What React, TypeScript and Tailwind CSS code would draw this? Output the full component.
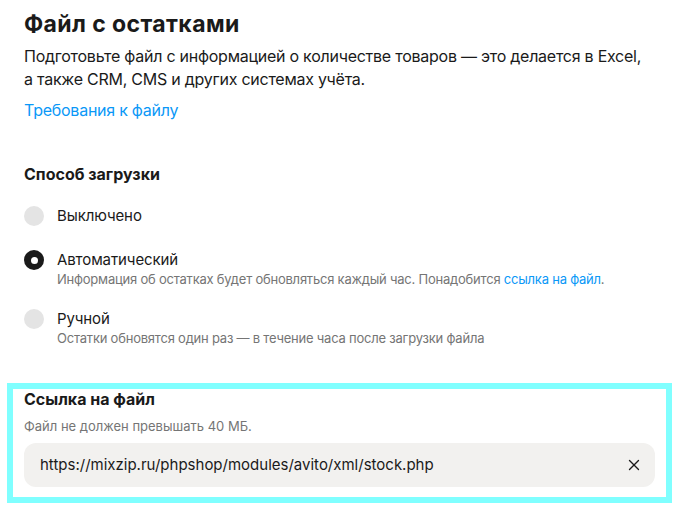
import { X } from "lucide-react";

type Option = {
  id: string;
  label: string;
  hint?: React.ReactNode;
};

const options: Option[] = [
  { id: "off", label: "Выключено" },
  {
    id: "auto",
    label: "Автоматический",
    hint: (
      <>
        Информация об остатках будет обновляться каждый час. Понадобится{" "}
        <a href="#" className="text-[#0a98f7]">
          ссылка на файл
        </a>
        .
      </>
    ),
  },
  {
    id: "manual",
    label: "Ручной",
    hint: "Остатки обновятся один раз — в течение часа после загрузки файла",
  },
];

const App = () => {
  const selected = "auto";

  return (
    <div className="min-h-[506px] bg-white font-['Inter',sans-serif] text-[#1a1a1a]">
      <div className="pl-6 pr-7 pt-[10px]">
        {/* Заголовок и описание */}
        <h1 className="text-[23px] font-bold leading-7 tracking-[0.4px]">Файл с остатками</h1>
        <p className="mt-[7px] text-[16px] leading-[23px] tracking-[-0.25px]">
          Подготовьте файл с информацией о количестве товаров — это делается в Excel,
          <br />а также CRM, CMS и других системах учёта.
        </p>
        <a
          href="#"
          className="mt-2 inline-block text-[16px] leading-[23px] tracking-[-0.25px] text-[#0a98f7]"
        >
          Требования к файлу
        </a>

        {/* Способ загрузки */}
        <h2 className="mt-[41px] text-[16px] font-bold leading-[22px]">Способ загрузки</h2>
        <div className="mt-5 flex flex-col gap-5">
          {options.map((opt) => (
            <label key={opt.id} className="flex min-h-6 items-start gap-[13px]">
              {opt.id === selected ? (
                <span className="mt-[1px] flex h-5 w-5 shrink-0 items-center justify-center rounded-full bg-[#1a1a1a]">
                  <span className="h-[7px] w-[7px] rounded-full bg-white" />
                </span>
              ) : (
                <span className="mt-[1px] h-5 w-5 shrink-0 rounded-full bg-[#e4e4e4]" />
              )}
              <span className="flex flex-col">
                <span className="text-[15px] leading-[22px] tracking-[-0.1px]">{opt.label}</span>
                {opt.hint && (
                  <span className="text-[13px] leading-[17px] tracking-[-0.22px] text-[#757575]">
                    {opt.hint}
                  </span>
                )}
              </span>
            </label>
          ))}
        </div>
      </div>

      {/* Ссылка на файл */}
      <div className="ml-[7px] mr-[28px] mt-[36px] border-[6px] border-[#80ffff] pb-[10px] pl-[11px] pr-[11px]">
        <h3 className="text-[16px] font-bold leading-5">Ссылка на файл</h3>
        <p className="mt-[9px] text-[13px] leading-[17px] text-[#757575]">
          Файл не должен превышать 40 МБ.
        </p>
        <div className="mt-2 flex h-11 items-center justify-between rounded-xl bg-[#f2f1ef] pl-4 pr-3">
          <span className="text-[15px]">https://mixzip.ru/phpshop/modules/avito/xml/stock.php</span>
          <X size={18} strokeWidth={1.8} />
        </div>
      </div>
    </div>
  );
};

export default App;
